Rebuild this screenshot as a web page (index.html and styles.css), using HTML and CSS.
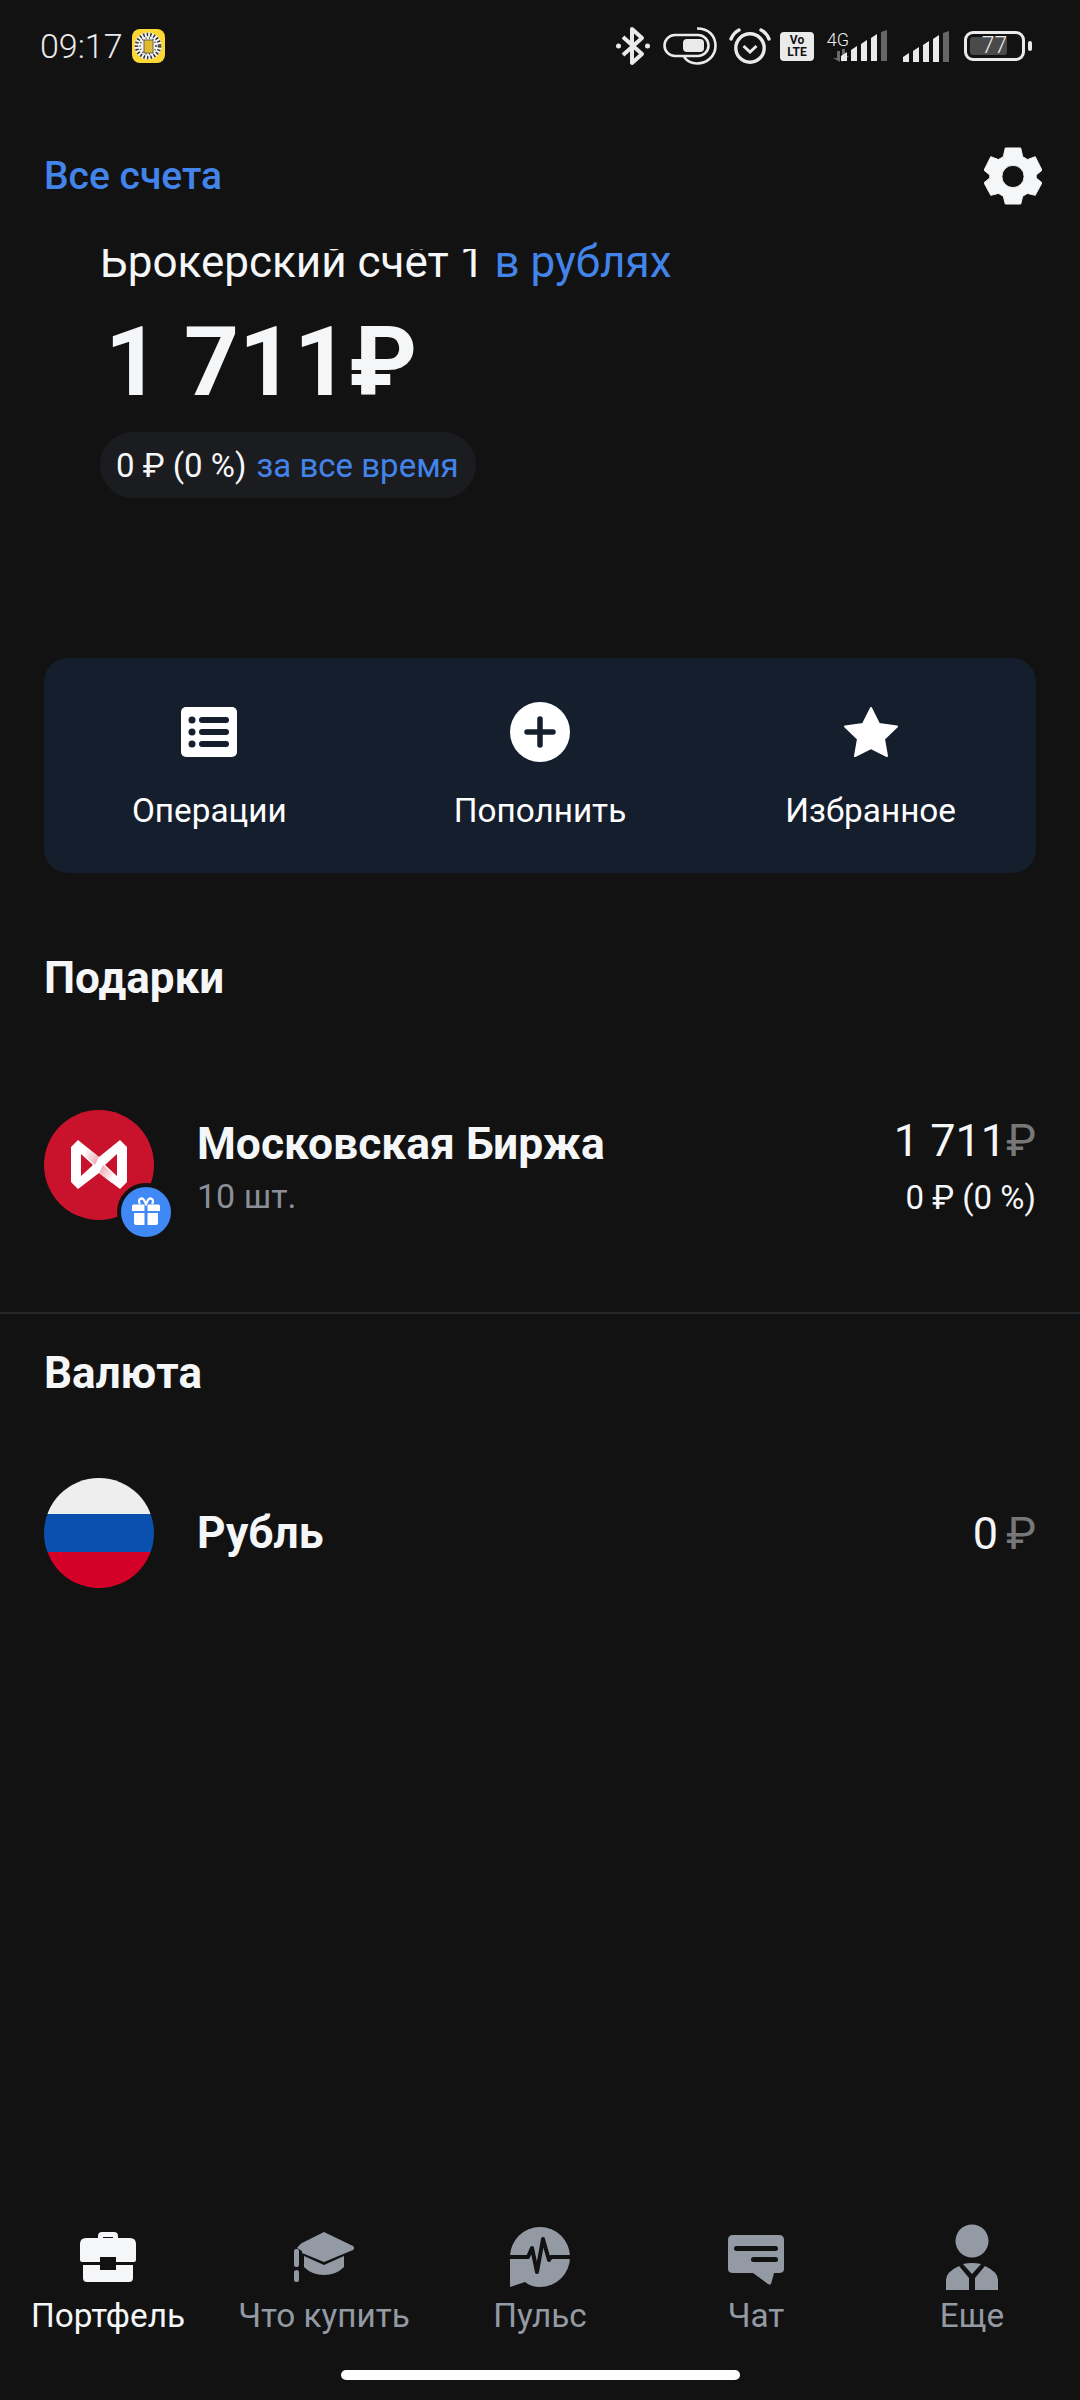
FILE: index.html
```html
<!DOCTYPE html>

<html>
  <head>
    <link rel="stylesheet" href="styles.css">
    <meta charset="utf-8" />
    <meta name="viewport" content="width=device-width, initial-scale=1" />
    <title>Портфель</title>
  </head>
  <body>
    <div class="page">
      <div class="statusBar">
        <span class="time">09:17</span>
        <svg class="notifIcon" width="33" height="34" viewBox="0 0 33 34">
          <rect width="33" height="34" rx="8" fill="#fdd835" />
          <circle cx="16" cy="17" r="13.5" fill="#f4f4f4" />
          <circle cx="16" cy="17" r="11.5" fill="none" stroke="#333" stroke-width="3.5" stroke-dasharray="1.5 2" />
          <circle cx="16" cy="17" r="8" fill="none" stroke="#555" stroke-width="2" stroke-dasharray="1 2.5" />
          <rect x="12" y="11" width="9" height="13" fill="#e0b92c" stroke="#665" stroke-width="1" />
        </svg>
        <div class="statusRight">
          <svg width="36" height="40" viewBox="0 0 36 40" fill="none" stroke="#eaeaea" stroke-width="4" stroke-linejoin="round">
            <path d="M8 11 L27 28 L17 37 V3 L27 12 L8 29" />
            <circle cx="3.5" cy="20" r="2.5" fill="#eaeaea" stroke="none" />
            <circle cx="32.5" cy="20" r="2.5" fill="#eaeaea" stroke="none" />
          </svg>
          <svg class="ml12" width="54" height="38" viewBox="0 0 54 38" fill="none" stroke="#eaeaea" stroke-width="2.6">
            <rect x="1.5" y="8" width="44" height="21" rx="10.5" />
            <rect x="20" y="12" width="21" height="13" rx="4" fill="#eaeaea" stroke="none" />
            <path d="M34 1.5 C46 1.5 52.5 9 52.5 19 C52.5 29 44 36.5 34 36.5 C28 36.5 24 34 21 30" />
          </svg>
          <svg class="ml12" width="42" height="36" viewBox="0 0 42 36" fill="none" stroke="#eaeaea" stroke-width="3.4">
            <circle cx="21" cy="20" r="14.2" />
            <path d="M14.5 18 L21 24 L27.5 18" stroke-width="3" />
            <path d="M2 11 C4 6 6 4 10 2 M40 11 C38 6 36 4 32 2" stroke-linecap="round" />
          </svg>
          <div class="volte"><span>Vo</span><span>LTE</span></div>
          <div class="signalNet">
            <span class="netText">4G</span>
            <svg width="16" height="14" viewBox="0 0 16 14" fill="#6a6a6a">
              <path d="M0 9 L4 9 L4 2 L7 2 L7 13 Z M9 0 L12 0 L12 7 L16 7 L9 13 Z" />
            </svg>
          </div>
          <svg class="signal" width="48" height="31" viewBox="0 0 48 31" fill="#eaeaea">
            <path d="M0 31 V26 L6 22 V31 Z M10 31 V20 L16 16 V31 Z M20 31 V14 L26 10 V31 Z M30 31 V8 L36 4 V31 Z" />
            <path d="M40 31 V2 L46 0 V31 Z" fill="#666" />
          </svg>
          <svg class="ml14" width="48" height="31" viewBox="0 0 48 31" fill="#eaeaea">
            <path d="M0 31 V26 L6 22 V31 Z M10 31 V20 L16 16 V31 Z M20 31 V14 L26 10 V31 Z M30 31 V8 L36 4 V31 Z" />
            <path d="M40 31 V2 L46 0 V31 Z" fill="#666" />
          </svg>
          <div class="battery">
            <div class="batteryBody">
              <div class="batteryFill"></div>
              <span class="batteryText">77</span>
            </div>
            <div class="batteryNub"></div>
          </div>
        </div>
      </div>

      <div class="topRow">
        <span class="allAccounts">Все счета</span>
        <svg width="58" height="58" viewBox="0 0 60 60" fill="#f5f6f8">
          <path fill-rule="evenodd" d="M22 1 H38 L40 10 L45 13 L53 10 L60 24 L54 29 V32 L60 37 L53 50 L45 48 L40 51 L38 59 H22 L20 51 L15 48 L7 50 L0 37 L6 32 V29 L0 24 L7 10 L15 13 L20 10 Z M30 19 A11.500 11.500 0 1 0 30 42 A11.500 11.500 0 1 0 30 19 Z" stroke="#f5f6f8" stroke-width="1" stroke-linejoin="round" />
        </svg>
      </div>

      <div class="account">
        <div class="accountName">
          <span class="accountTitle">Брокерский счёт 1</span>
          <span class="blue">в рублях</span>
        </div>
        <div class="total">1 711<span class="totalCur">₽</span></div>
        <div class="pill">
          <span>0 ₽ (0 %)</span>
          <span class="blue">за все время</span>
        </div>
      </div>

      <div class="actions">
        <div class="action">
          <svg width="56" height="50" viewBox="0 0 56 50">
            <rect width="56" height="50" rx="5" fill="#fff" />
            <g fill="#141e2d">
              <circle cx="11" cy="13" r="3.500" />
              <circle cx="11" cy="25" r="3.500" />
              <circle cx="11" cy="37" r="3.500" />
              <rect x="18" y="10" width="30" height="6" rx="3" />
              <rect x="18" y="22" width="30" height="6" rx="3" />
              <rect x="18" y="34" width="30" height="6" rx="3" />
            </g>
          </svg>
          <span>Операции</span>
        </div>
        <div class="action">
          <svg width="60" height="60" viewBox="0 0 60 60">
            <circle cx="30" cy="30" r="30" fill="#fff" />
            <path d="M30 17 V43 M17 30 H43" stroke="#141e2d" stroke-width="5.500" stroke-linecap="round" />
          </svg>
          <span>Пополнить</span>
        </div>
        <div class="action">
          <svg width="56" height="50" viewBox="0 0 56 50">
            <path d="M28 1 L36 17 L54 19.500 L41 32 L44 49 L28 41 L12 49 L15 32 L2 19.500 L20 17 Z" fill="#fff" stroke="#fff" stroke-width="2" stroke-linejoin="round" />
          </svg>
          <span>Избранное</span>
        </div>
      </div>

      <h2 class="sectionTitle giftsTitle">Подарки</h2>

      <div class="row giftRow">
        <div class="logo moex">
          <svg width="110" height="110" viewBox="0 0 110 110">
            <defs>
              <linearGradient id="fadeA" x1="0" y1="0" x2="1" y2="1">
                <stop offset="0" stop-color="#fff" />
                <stop offset="1" stop-color="#e9a0ab" />
              </linearGradient>
              <linearGradient id="fadeB" x1="0" y1="0" x2="1" y2="1">
                <stop offset="0" stop-color="#e9a0ab" />
                <stop offset="1" stop-color="#fff" />
              </linearGradient>
            </defs>
            <path fill="#fff" fill-rule="evenodd" d="M27 37 L34 30 L55 47 L76 30 L83 37 V72 L76 79 L55 63 L34 79 L27 72 Z M37 44 V66 L49 55 Z M73 44 V66 L61 55 Z" />
            <path fill="url(#fadeA)" d="M42 37 L55 47 L51 55 L42 47 Z" />
            <path fill="url(#fadeB)" d="M59 55 L68 63 V73 L55 63 Z" />
          </svg>
          <div class="giftBadge">
            <svg width="30" height="30" viewBox="0 0 30 30" fill="#fff">
              <path d="M9 7 C6 2 11 0 13 3 L15 7 L17 3 C19 0 24 2 21 7" fill="none" stroke="#fff" stroke-width="2.200" />
              <path d="M1 9 Q1 7.500 2.500 7.500 H13.500 V14 H1 Z M16.500 7.500 H27.500 Q29 7.500 29 9 V14 H16.500 Z M3 16 H13.500 V28 H5 Q3 28 3 26 Z M16.500 16 H27 V26 Q27 28 25 28 H16.500 Z" />
            </svg>
          </div>
        </div>
        <div class="rowInfo">
          <span class="rowName">Московская Биржа</span>
          <span class="rowSub">10 шт.</span>
        </div>
        <div class="rowRight">
          <span class="rowValue">1 711<span class="cur">₽</span></span>
          <span class="rowChange">0 ₽ (0 %)</span>
        </div>
      </div>

      <h2 class="sectionTitle currencyTitle">Валюта</h2>

      <div class="row currencyRow">
        <div class="logo flag"></div>
        <div class="rowInfo">
          <span class="rowName">Рубль</span>
        </div>
        <div class="rowRight">
          <span class="rowValue">0 <span class="cur">₽</span></span>
        </div>
      </div>

      <nav class="bottomNav">
        <div class="navItem active">
          <svg width="56" height="62" viewBox="0 0 56 62" fill="#f5f6f8">
            <path fill-rule="evenodd" d="M18 12 V10 Q18 6 22 6 H34 Q38 6 38 10 V12 H50 Q56 12 56 18 V34 Q56 36 54 36 H36 V31 H20 V36 H2 Q0 36 0 34 V18 Q0 12 6 12 Z M23 12 H33 V11 H23 Z" />
            <path d="M3 39 H20 V44 H36 V39 H53 V52 Q53 56 49 56 H7 Q3 56 3 52 Z" />
          </svg>
          <span>Портфель</span>
        </div>
        <div class="navItem">
          <svg width="60" height="62" viewBox="0 0 60 62" fill="#939aa4">
            <path d="M30 6 L59 20 Q61 22 59 24 L30 36 L8 27 V25 L3 22 Q5 19 8 17 Z" />
            <path d="M10 30 L30 39 L50 30 V41 Q42 49 30 49 Q18 49 10 41 Z" />
            <rect x="0" y="23" width="5" height="18" rx="2" />
            <rect x="0" y="44" width="5" height="12" rx="2.500" />
          </svg>
          <span>Что купить</span>
        </div>
        <div class="navItem">
          <svg width="62" height="62" viewBox="0 0 62 62">
            <path d="M1 31 A30 30 0 1 1 31 61 Q22 61 16 56 L1 61 Z" fill="#939aa4" />
            <path d="M-1 31 H19 L23 22 L28 46 L34 13 L40 34 L42 31 H64" fill="none" stroke="#121212" stroke-width="4" stroke-linejoin="round" />
          </svg>
          <span>Пульс</span>
        </div>
        <div class="navItem">
          <svg width="56" height="62" viewBox="0 0 56 62" fill="#939aa4">
            <path fill-rule="evenodd" d="M5 9 H51 Q56 9 56 14 V43 Q56 47 51 47 H46 L43 58 Q42 59 40 58 L25 47 H5 Q0 47 0 43 V14 Q0 9 5 9 Z" />
            <rect x="6" y="20" width="44" height="5" rx="2.500" fill="#121212" />
            <rect x="23" y="31" width="27" height="5" rx="2.500" fill="#121212" />
          </svg>
          <span>Чат</span>
        </div>
        <div class="navItem">
          <svg width="52" height="66" viewBox="0 0 52 66" fill="#939aa4">
            <ellipse cx="26" cy="17" rx="16.500" ry="16.500" />
            <path d="M13 42 L23 54 V66 H0 V56 Q0 48 13 42 Z M39 42 L29 54 V66 H52 V56 Q52 48 39 42 Z" />
            <path d="M17 40 Q26 38 35 40 L26 50 Z" />
          </svg>
          <span>Еще</span>
        </div>
      </nav>

      <div class="homeBar"></div>
    </div>
  </body>
</html>
```

FILE: styles.css
```css
* {
  box-sizing: border-box;
}

body {
  margin: 0;
  background: #121212;
  font-family: "Roboto", sans-serif;
  color: #f5f6f8;
}

.page {
  display: flex;
  flex-direction: column;
  width: 1080px;
  height: 2400px;
  overflow: hidden;
}

.blue {
  color: #4384ea;
}

.statusBar {
  display: flex;
  align-items: center;
  height: 92px;
  padding: 0 48px 0 40px;
}

.time {
  font-size: 34px;
  font-weight: 300;
  color: #eaeaea;
  margin-right: 9px;
}

.statusRight {
  display: flex;
  align-items: center;
  margin-left: auto;
}

.ml12 {
  margin-left: 12px;
}

.ml14 {
  margin-left: 14px;
}

.volte {
  display: flex;
  flex-direction: column;
  align-items: center;
  justify-content: center;
  width: 34px;
  height: 29px;
  margin-left: 9px;
  border-radius: 4px;
  background: #eaeaea;
  color: #121212;
  font-size: 12px;
  font-weight: 700;
  line-height: 12px;
}

.signalNet {
  display: flex;
  flex-direction: column;
  align-items: flex-end;
  width: 28px;
  margin-left: 7px;
  margin-top: 2px;
}

.netText {
  font-size: 18px;
  line-height: 18px;
  font-weight: 300;
  color: #eaeaea;
}

.signal {
  margin-left: -8px;
  margin-top: -1px;
}

.battery {
  display: flex;
  align-items: center;
  margin-left: 13px;
}

.batteryBody {
  position: relative;
  width: 61px;
  height: 30px;
  border: 3px solid #eaeaea;
  border-radius: 9px;
}

.batteryFill {
  position: absolute;
  left: 3px;
  top: 3px;
  bottom: 3px;
  width: 37px;
  border-radius: 3px;
  background: #4a4a4a;
}

.batteryText {
  position: absolute;
  left: 0;
  right: 0;
  top: 0;
  text-align: center;
  font-size: 23px;
  font-weight: 300;
  line-height: 24px;
  color: #eaeaea;
}

.batteryNub {
  width: 4px;
  height: 10px;
  margin-left: 3px;
  border-radius: 2px;
  background: #eaeaea;
}

.topRow {
  display: flex;
  align-items: center;
  justify-content: space-between;
  height: 60px;
  margin-top: 54px;
  padding: 0 38px 0 44px;
}

.allAccounts {
  font-size: 39px;
  font-weight: 500;
  color: #4384ea;
}

.account {
  display: flex;
  flex-direction: column;
  align-items: flex-start;
  padding-left: 100px;
}

.accountName {
  display: flex;
  align-items: baseline;
  gap: 10px;
  margin-top: 33px;
  font-size: 44px;
  line-height: 46px;
  white-space: nowrap;
}

/* the app cuts the tops of the letters off here */
.accountTitle {
  display: block;
  height: 40px;
  line-height: 26px;
  overflow: hidden;
}

.total {
  margin-top: 17px;
  margin-left: 5px;
  font-size: 96px;
  font-weight: 700;
  line-height: 112px;
}

.pill {
  display: flex;
  align-items: center;
  gap: 10px;
  height: 66px;
  margin-top: 14px;
  padding: 0 17px 0 16px;
  border-radius: 33px;
  background: #1b1c20;
  font-size: 33px;
}

.actions {
  display: grid;
  grid-template-columns: repeat(3, 1fr);
  height: 215px;
  margin: 160px 44px 0;
  border-radius: 24px;
  background: #141e2d;
}

.action {
  display: flex;
  flex-direction: column;
  align-items: center;
  justify-content: flex-start;
  padding-top: 44px;
  font-size: 33.3px;
  color: #fff;
}

.action svg {
  height: 60px;
}

.action span {
  margin-top: 29px;
}

.sectionTitle {
  margin: 0;
  padding-left: 44px;
  font-size: 44px;
  font-weight: 700;
  line-height: 52px;
}

.giftsTitle {
  margin-top: 79px;
}

.row {
  display: flex;
  align-items: center;
  padding: 0 44px;
}

.giftRow {
  height: 110px;
  margin-top: 106px;
}

.logo {
  position: relative;
  flex: none;
  width: 110px;
  height: 110px;
  border-radius: 50%;
}

.moex {
  background: #c9122b;
}

.moex svg {
  display: block;
}

.giftBadge {
  position: absolute;
  left: 73px;
  top: 73px;
  display: flex;
  align-items: center;
  justify-content: center;
  width: 58px;
  height: 58px;
  border: 4px solid #121212;
  border-radius: 50%;
  background: #3f88f5;
}

.flag {
  background: linear-gradient(#eeeeee 0 33%, #0a50ae 33% 67.5%, #d50028 67.5%);
}

.rowInfo {
  display: flex;
  flex-direction: column;
  margin-left: 43px;
}

.giftRow .rowInfo {
  margin-top: 3px;
}

.rowName {
  font-size: 44.4px;
  font-weight: 700;
  line-height: 52px;
}

.rowSub {
  margin-top: 6px;
  font-size: 34px;
  line-height: 40px;
  color: #8a8f98;
}

.rowRight {
  display: flex;
  flex-direction: column;
  align-items: flex-end;
  margin-top: 2px;
  margin-left: auto;
}

.rowValue {
  font-size: 45px;
  font-weight: 400;
  line-height: 52px;
}

.currencyRow .rowValue {
  word-spacing: -3px;
}

.cur {
  color: #777;
}

.rowChange {
  margin-top: 11px;
  font-size: 33px;
  line-height: 40px;
}

.currencyTitle {
  margin-top: 92px;
  padding-top: 33px;
  border-top: 2px solid #26272a;
}

.currencyRow {
  height: 110px;
  margin-top: 79px;
}

.bottomNav {
  display: grid;
  grid-template-columns: repeat(5, 1fr);
  margin-top: auto;
  color: #939aa4;
}

.navItem {
  display: flex;
  flex-direction: column;
  align-items: center;
  font-size: 33.3px;
  line-height: 40px;
}

.navItem svg {
  height: 66px;
  margin-bottom: 6px;
  overflow: visible;
}

.navItem.active {
  color: #f5f6f8;
}

.homeBar {
  width: 399px;
  height: 10px;
  margin: 34px auto 20px;
  border-radius: 5px;
  background: #fff;
}
```
